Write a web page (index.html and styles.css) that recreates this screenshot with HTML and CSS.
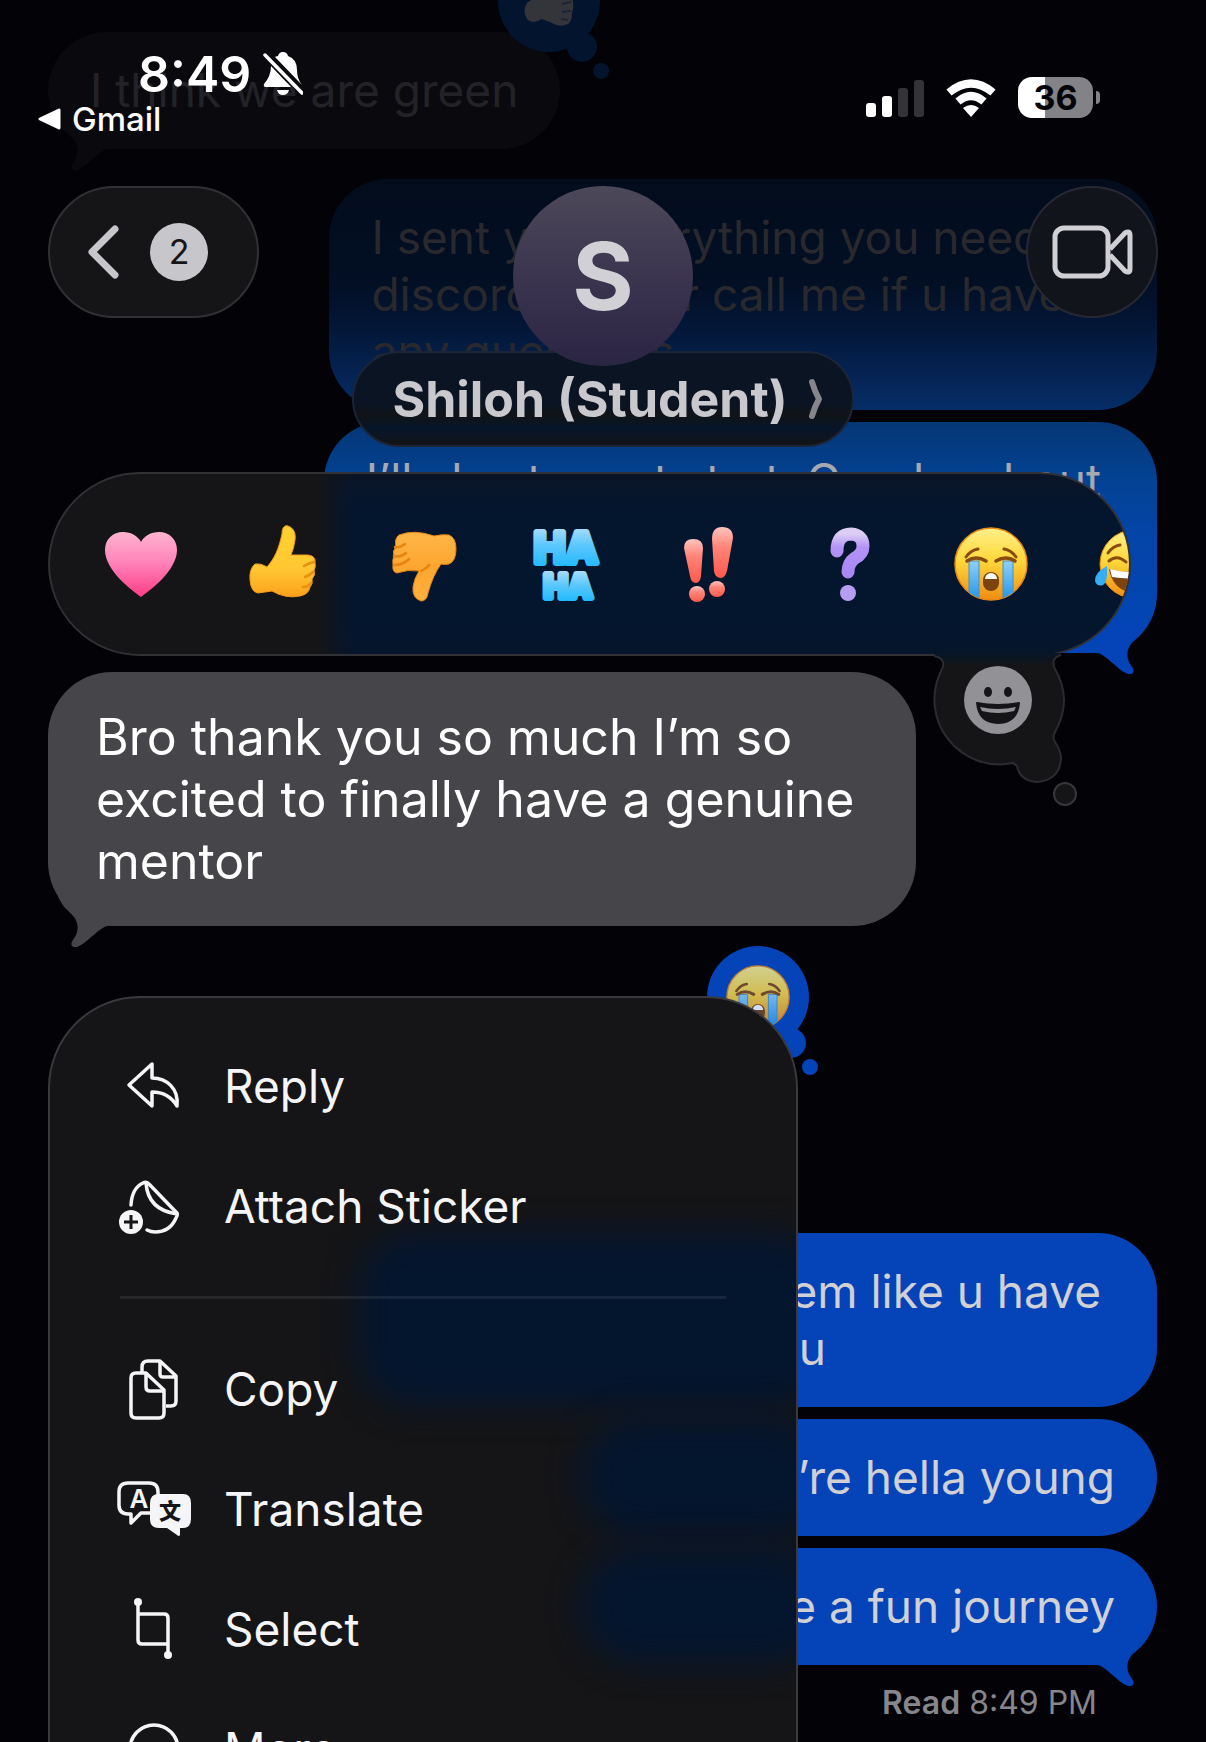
FILE: index.html
```html
<!DOCTYPE html>
<html lang="en">
<head>
<meta charset="utf-8">
<meta name="viewport" content="width=device-width, initial-scale=1">
<title>Shiloh (Student)</title>
<link rel="stylesheet" href="styles.css">
</head>
<body>
<svg class="defs" width="0" height="0" aria-hidden="true">
  <defs>
    <linearGradient id="yellow" x1="0" y1="0" x2="0" y2="1"><stop offset="0" stop-color="#fff08a"/><stop offset=".45" stop-color="#ffd83a"/><stop offset="1" stop-color="#f08c12"/></linearGradient>
    <linearGradient id="hand" x1="0" y1="0" x2="0" y2="1"><stop offset="0" stop-color="#ffd22e"/><stop offset=".6" stop-color="#ffc733"/><stop offset="1" stop-color="#fba21a"/></linearGradient>
    <linearGradient id="hand-down" x1="0" y1="0" x2="0" y2="1"><stop offset="0" stop-color="#ffb648"/><stop offset=".5" stop-color="#fda62f"/><stop offset="1" stop-color="#ffb040"/></linearGradient>
    <linearGradient id="pink" x1="0" y1="0" x2="0" y2="1"><stop offset="0" stop-color="#ffb3cf"/><stop offset=".45" stop-color="#ff85bb"/><stop offset="1" stop-color="#ff3d86"/></linearGradient>
    <linearGradient id="sky" x1="0" y1="0" x2="0" y2="1"><stop offset="0" stop-color="#bfe3fb"/><stop offset=".45" stop-color="#5cc8fd"/><stop offset="1" stop-color="#12b5ff"/></linearGradient>
    <linearGradient id="coral" x1="0" y1="0" x2="0" y2="1"><stop offset="0" stop-color="#ffc4bc"/><stop offset=".4" stop-color="#ff8377"/><stop offset="1" stop-color="#ff5a4c"/></linearGradient>
    <linearGradient id="violet" x1="0" y1="0" x2="0" y2="1"><stop offset="0" stop-color="#dccdf5"/><stop offset=".35" stop-color="#b394f6"/><stop offset="1" stop-color="#a988f2"/></linearGradient>
    <linearGradient id="tear" x1="0" y1="0" x2="0" y2="1"><stop offset="0" stop-color="#8fd0fb"/><stop offset="1" stop-color="#1f93e6"/></linearGradient>
    <linearGradient id="cloud-fill" x1="0" y1="0" x2="0" y2="1"><stop offset="0" stop-color="#07152a"/><stop offset=".1" stop-color="#151517"/></linearGradient>
    <clipPath id="face-clip"><circle cx="37" cy="37" r="36"/></clipPath>
    <symbol id="cry" viewBox="0 0 74 74">
      <circle cx="37" cy="37" r="36" fill="url(#yellow)" stroke="#e88a14" stroke-width="1.5"/>
      <g clip-path="url(#face-clip)">
        <path d="M15 34h10v40H15zM49 34h10v40H49z" fill="url(#tear)" stroke="#3f8fd0" stroke-width="1"/>
      </g>
      <path d="M12 30q5-7 12-8M62 30q-5-7-12-8" fill="none" stroke="#8a4a10" stroke-width="3" stroke-linecap="round"/>
      <path d="M13 34q9-6 19 0M42 34q10-6 19 0" fill="none" stroke="#8a4a10" stroke-width="3.5" stroke-linecap="round"/>
      <rect x="29" y="45" width="16" height="19" rx="8" fill="#7c430f"/>
      <path d="M31 52a6 6 0 0 1 12 0z" fill="#fff"/>
    </symbol>
    <symbol id="tail" viewBox="0 0 60 61">
      <path d="M0 40C9 41 20 57 31 61C37 62 38 58 35 54C29 46 29 38 34 31C39 25 46 21 50 10L20 8L0 36Z"/>
    </symbol>
    <symbol id="thought" viewBox="0 0 112 130">
      <circle cx="51" cy="51" r="51"/><circle cx="84" cy="97" r="15"/><circle cx="103" cy="121" r="8"/>
    </symbol>
  </defs>
</svg>

<main class="screen">
  <section class="thread" aria-label="Conversation">
    <div class="bubble received faded">I think we are green
      <svg class="tail"><use href="#tail"/></svg>
      <span class="tapback">
        <svg class="cloud"><use href="#thought"/></svg>
        <svg class="mini-thumb" viewBox="0 0 50 28"><path d="M3 4Q10-2 20-2L40-6Q48-6 49 2Q50 8 48 14Q48 22 44 25Q36 29 28 24L18 20Q8 26 3 20Q-2 12 3 4Z"/><path d="M38 5l9-2M38 13l9-1M37 20l7 1" stroke="#1c2534" stroke-width="2"/></svg>
      </span>
    </div>
    <div class="bubble sent first">I sent you everything you need on<br>discord, text or call me if u have<br>any questions</div>
    <div class="bubble sent second slack">I’ll also try out start. Good u about<br><br><br>
      <svg class="tail"><use href="#tail"/></svg>
    </div>
    <div class="bubble received covered">
      <span class="tapback blue">
        <svg class="cloud"><use href="#thought"/></svg>
        <svg class="mini-cry"><use href="#cry"/></svg>
      </span>
    </div>
    <div class="bubble sent group slack">And you really seem like u have<br>a lot in front of you</div>
    <div class="bubble sent">And you’re hella young</div>
    <div class="bubble sent">This will be a fun journey
      <svg class="tail"><use href="#tail"/></svg>
    </div>
    <p class="receipt"><b>Read</b> 8:49 PM</p>
  </section>

  <div class="overlay">
    <header class="status">
      <div class="clock">
        <div class="time">8:49
          <svg width="40" height="44" viewBox="0 0 40 44"><path fill="#fff" d="M20 0q4 0 5 4q9 3 9 14q0 9 5 15L12 5q2-1 3-1q1-4 5-4zM8 14L28 35H3q-3 0-2-3q7-8 7-18zM14 38h12q-1 5-6 5t-6-5z"/><path d="M2 3L39 41" stroke="#fff" stroke-width="3.5" stroke-linecap="round"/></svg>
        </div>
        <a class="return" href="#"><svg width="23" height="22" viewBox="0 0 23 22"><path d="M21 2v18L2 11z" fill="#fff" stroke="#fff" stroke-width="3" stroke-linejoin="round"/></svg>Gmail</a>
      </div>
      <div class="indicators">
        <svg width="58" height="38" viewBox="0 0 58 38"><g fill="#fff"><rect y="24" width="10" height="14" rx="3"/><rect x="16" y="17" width="10" height="21" rx="3"/></g><g fill="#333338"><rect x="32" y="9" width="10" height="29" rx="3"/><rect x="48" y="1" width="10" height="37" rx="3"/></g></svg>
        <svg width="50" height="38" viewBox="0 0 50 38"><g fill="none" stroke="#fff" stroke-width="8"><path d="M3 13.500Q25-4.500 47 13.500"/><path d="M12 22.500Q25 11.500 38 22.500"/></g><path d="M17 29q8-6 16 0l-8 9z" fill="#fff"/></svg>
        <div class="battery">36</div>
      </div>
    </header>

    <nav class="bar">
      <button class="glass back" aria-label="Back, 2 unread">
        <svg width="32" height="54" viewBox="0 0 32 54"><path d="M28 4L5 27L28 50" fill="none" stroke="#c6c6cb" stroke-width="7" stroke-linecap="round" stroke-linejoin="round"/></svg>
        <span class="unread">2</span>
      </button>
      <div class="contact">
        <div class="avatar">S</div>
        <button class="glass name">Shiloh (Student)
          <svg width="16" height="42" viewBox="0 0 16 42"><path d="M4 4Q7 14 11 21Q7 28 4 38" fill="none" stroke="#85858a" stroke-width="6" stroke-linecap="round" stroke-linejoin="round"/></svg>
        </button>
      </div>
      <button class="glass video" aria-label="FaceTime">
        <svg width="82" height="56" viewBox="0 0 82 56"><g fill="none" stroke="#cfcfd4" stroke-width="5" stroke-linejoin="round"><rect x="4" y="4" width="53" height="48" rx="9"/><path d="M59 25L74 9Q79 6 79 11V45Q79 50 74 47L59 31"/></g></svg>
      </button>
    </nav>

    <div class="tapbacks">
      <div class="glass reactions">
        <button aria-label="Heart"><svg viewBox="0 0 74 74"><path fill="url(#pink)" d="M37 70C29 64 1 44 1 23C1 12 9 5 19 5C27 5 34 9 37 15C40 9 47 5 55 5C65 5 73 12 73 23C73 44 45 64 37 70Z"/></svg></button>
        <button aria-label="Like"><svg viewBox="0 0 74 74"><path fill="url(#hand)" stroke="#f29a1c" stroke-width="1" d="M21 40C29 31 33 21 36 7C36 0 39-2 42-1C48 1 50 7 49 13Q48 21 45 28L62 28Q70 29 69 36Q70 40 68 43Q70 48 66 52Q67 57 64 60Q63 67 54 69Q40 72 26 64L12 66Q5 65 4 53Q3 42 9 37Q15 36 21 40Z"/><path d="M58 39q5-3 10-4M59 50q5-2 8-5M57 60q5 0 8-4" fill="none" stroke="#ec8e10" stroke-width="2.500" stroke-linecap="round"/></svg></button>
        <button aria-label="Dislike"><svg viewBox="0 0 74 74"><path fill="url(#hand-down)" stroke="#e88614" stroke-width="1" d="M11 8Q26 2 46 9Q55 7 61 8Q68 11 68 22Q68 34 61 37Q56 38 53 37Q45 48 40 66Q39 74 33 74Q24 71 25 60Q26 52 31 44Q20 42 9 46Q4 45 5 38Q4 33 6 29Q4 24 8 20Q6 12 11 8Z"/><path d="M6 29q6 2 12-3M7 20q5 1 10-3M7 38q8 0 14-6M33 44q6-3 8-6" fill="none" stroke="#e88410" stroke-width="2.500" stroke-linecap="round"/></svg></button>
        <button aria-label="Haha"><svg viewBox="0 0 74 74"><g font-family="Inter, sans-serif" font-weight="800" fill="url(#sky)" stroke="url(#sky)" stroke-width="6" stroke-linejoin="round" stroke-linecap="round" text-anchor="middle"><text x="36" y="36" font-size="42">HA</text><text x="38" y="71" font-size="32">HA</text></g></svg></button>
        <button aria-label="Emphasize"><svg viewBox="0 0 74 74"><g fill="url(#coral)"><path d="M12 21q0-9 9-9q10 0 10 9L29 49q-1 7-5 7q-5 0-6-7Z"/><path d="M40 12q0-12 10-12q11 0 11 11L55 44q-2 7-6 7q-6 0-7-7Z"/><circle cx="25" cy="67" r="8"/><circle cx="45" cy="62" r="8"/></g></svg></button>
        <button aria-label="Question"><svg viewBox="0 0 74 74"><path d="M23 24Q23 7 37 7Q49 8 49 19Q49 27 41 31Q34 36 34 45" fill="none" stroke="url(#violet)" stroke-width="13" stroke-linecap="round"/><circle cx="34" cy="66" r="8" fill="#b79df2"/></svg></button>
        <button aria-label="Crying"><svg viewBox="2 0 74 74"><use href="#cry" width="74" height="74"/></svg></button>
        <button aria-label="Laughing"><svg viewBox="3 0 74 74"><circle cx="39" cy="37" r="34" fill="url(#yellow)" stroke="#e88a14"/><path d="M13 26q5-7 12-8M14 34q8-7 17 1" fill="none" stroke="#8a4a10" stroke-width="3" stroke-linecap="round"/><path d="M14 42Q37 48 64 42Q60 66 39 66Q18 64 14 42Z" fill="#7c430f"/><path d="M15 42Q37 48 63 42L62 50Q37 53 17 50Z" fill="#fff"/><path d="M12 39Q-1 46 0 54Q2 60 8 58Q13 55 12 39Z" fill="#35aef2"/></svg></button>
      </div>
      <button class="picker" aria-label="More emoji">
        <svg width="160" height="162" viewBox="0 0 160 162">
          <path d="M10 6L12 3H135L137 5Q126 8 131 19Q149 50 131 82Q128 88 131 92Q137 101 137 108Q136 130 113 132Q96 131 93 116Q91 114 89 113A65 65 0 0 1 17 21Q24 9 10 6Z" fill="url(#cloud-fill)"/>
          <path d="M10 6Q24 9 17 21A65 65 0 0 0 89 113Q91 114 93 116Q96 131 113 132Q136 130 137 108Q137 101 131 92Q128 88 131 82Q149 50 131 19Q126 8 137 5" fill="none" stroke="#2c2c30" stroke-width="2"/>
          <circle cx="141" cy="144" r="11" fill="#151517" stroke="#37373b" stroke-width="2"/>
          <circle cx="74" cy="50" r="34" fill="#919196"/>
          <ellipse cx="64" cy="42" rx="4" ry="5" fill="#151517"/><ellipse cx="84" cy="42" rx="4" ry="5" fill="#151517"/>
          <path d="M53 53Q74 57 95 53Q93 73 74 73Q55 73 53 53Z" fill="#151517" stroke="#151517" stroke-width="2" stroke-linejoin="round"/>
          <path d="M56 57Q74 61 92 57L90 61Q74 65 58 61Z" fill="#919196"/>
        </svg>
      </button>
    </div>

    <div class="bubble focused">Bro thank you so much I’m so<br>excited to finally have a genuine<br>mentor
      <svg class="tail"><use href="#tail"/></svg>
    </div>

    <div class="glass menu" role="menu">
      <div class="glow" aria-hidden="true"><i class="wide"></i><i></i><i></i></div>
      <button role="menuitem"><svg viewBox="0 0 76 64"><path d="M12 31L35 10V24C50 24 62 35 60 52C54 42 46 38 35 38V52Z" fill="none" stroke="#f5f5f7" stroke-width="3.500" stroke-linejoin="round"/></svg>Reply</button>
      <button role="menuitem"><svg viewBox="0 0 76 64"><g fill="none" stroke="#f5f5f7" stroke-width="3.500" stroke-linecap="round" stroke-linejoin="round"><path d="M14 31Q15 14 26 9Q29 7 32 10L58 37Q62 40 59 44Q53 58 38 58Q34 58 30 56"/><path d="M29 9Q31 36 60 40"/></g><circle cx="14" cy="48" r="12" fill="#f5f5f7"/><path d="M14 41v14M7 48h14" stroke="#151517" stroke-width="3"/></svg>Attach Sticker</button>
      <hr>
      <button role="menuitem"><svg viewBox="0 0 76 64"><g fill="none" stroke="#f5f5f7" stroke-width="3.500" stroke-linejoin="round"><path d="M25 15V10Q25 4 31 4H43L59 19V44Q59 49 54 49H49"/><path d="M43 4V17Q43 20 46 20H58"/><path d="M19 16H29L47 33V56Q47 61 42 61H19Q14 61 14 56V21Q14 16 19 16Z"/><path d="M29 16V30Q29 34 33 34H47"/></g></svg>Copy</button>
      <button role="menuitem"><svg viewBox="0 0 76 64"><path d="M33 36H24L14 46V37H11Q2 37 2 28V15Q2 6 11 6H32Q41 6 41 15V17" fill="none" stroke="#f5f5f7" stroke-width="3.500" stroke-linecap="round" stroke-linejoin="round"/><text x="22" y="31" font-size="26" font-weight="600" text-anchor="middle" fill="#f5f5f7">A</text><path d="M42 17H66Q74 17 74 26V42Q74 51 66 51H63V58Q62 60 60 58L50 51H42Q33 51 33 42V26Q33 17 42 17Z" fill="#f5f5f7"/><text class="cjk" x="53" y="42" font-size="22" font-weight="900" text-anchor="middle" fill="#151517">文</text></svg>Translate</button>
      <button role="menuitem"><svg viewBox="0 0 76 64"><path d="M21 5V43Q21 47 25 47H51M21 17H47Q51 17 51 21V58" fill="none" stroke="#f5f5f7" stroke-width="3.500"/><circle cx="21" cy="5" r="4" fill="#f5f5f7"/><circle cx="51" cy="58" r="4" fill="#f5f5f7"/></svg>Select</button>
      <button role="menuitem"><svg viewBox="0 0 76 64"><circle cx="37" cy="32" r="24" fill="none" stroke="#f5f5f7" stroke-width="3.500"/><g fill="#f5f5f7"><circle cx="26" cy="32" r="3"/><circle cx="37" cy="32" r="3"/><circle cx="48" cy="32" r="3"/></g></svg>More…</button>
    </div>
  </div>
</main>
</body>
</html>
```

FILE: styles.css
```css
* { box-sizing: border-box; }

body {
  margin: 0;
  background: #020207;
  color: #f5f5f7;
  font-family: Inter, "Liberation Sans", sans-serif;
}

svg { display: block; flex: none; }
.defs { position: absolute; }

button {
  margin: 0;
  padding: 0;
  border: 0;
  background: none;
  color: inherit;
  font: inherit;
  text-align: left;
}

.screen {
  display: grid;
  height: 100vh;
  overflow: hidden;
}

.thread, .overlay {
  grid-area: 1 / 1;
  min-width: 0;
  display: flex;
  flex-direction: column;
  padding: 0 48px;
}
.thread { padding-right: 49px; }

/* Message bubbles */
.bubble {
  position: relative;
  flex: none;
  padding: 30px 42px;
  border-radius: 59px;
  font-size: 46px;
  line-height: 57px;
  white-space: nowrap;
}

.tail {
  position: absolute;
  right: 0;
  bottom: -21px;
  width: 60px;
  height: 61px;
}

.sent {
  align-self: flex-end;
  margin-top: 12px;
  background: #0443b8;
  color: #d0d0d5;
}
.sent .tail { fill: #0443b8; }
.slack { padding-right: 56px; }

.received, .focused { align-self: flex-start; }
.received .tail, .focused .tail {
  right: auto;
  left: 0;
  transform: scaleX(-1);
}

.faded {
  margin-top: 32px;
  background: #0a0a0e;
  color: #232327;
}
.faded .tail { fill: #0a0a0e; }

.first {
  margin-top: 30px;
  padding-right: 48px;
  background: linear-gradient(#020c1c, #020f24 45%, #031738 65%, #062d68);
  color: #29292d;
}

.second {
  background: linear-gradient(#053675, #034293 25%, #0345a8 50%, #0345b8);
  color: #a7a9b0;
}

.covered {
  width: 65%;
  height: 174px;
  margin-top: 375px;
  background: #151517;
}

.group { margin-top: 31px; }

.receipt {
  align-self: flex-end;
  margin: 18px 60px 0 0;
  color: #86868b;
  font-size: 32px;
  line-height: 40px;
}
.receipt b { font-weight: 600; }

.tapback {
  position: absolute;
  top: -82px;
  right: -50px;
  width: 112px;
  height: 130px;
  fill: #03142f;
}
.tapback.blue { fill: #0443b8; }
.cloud { width: 112px; height: 130px; }
.mini-thumb {
  position: absolute;
  top: 49px;
  left: 26px;
  width: 50px;
  height: 28px;
  fill: #34353a;
}
.mini-cry {
  position: absolute;
  top: 19px;
  left: 19px;
  width: 64px;
  height: 64px;
  opacity: .82;
}

/* Status bar */
.overlay { position: relative; }

.status {
  flex: none;
  display: flex;
  justify-content: space-between;
  align-items: flex-start;
  height: 186px;
  margin: 0 58px 0 -10px;
}

.clock { padding-top: 44px; }

.time {
  display: flex;
  align-items: center;
  gap: 12px;
  padding-left: 100px;
  font-size: 50px;
  font-weight: 600;
  line-height: 60px;
  color: #fff;
}

.return {
  display: flex;
  align-items: center;
  gap: 11px;
  color: #fff;
  font-size: 33px;
  font-weight: 500;
  line-height: 30px;
  text-decoration: none;
}

.indicators {
  display: flex;
  align-items: center;
  gap: 22px;
  padding-top: 77px;
}

.battery {
  position: relative;
  width: 75px;
  margin-right: 7px;
  border-radius: 14px;
  background: linear-gradient(90deg, #fff 36%, #828287 36%);
  color: #050509;
  font-size: 34px;
  font-weight: 700;
  line-height: 41px;
  text-align: center;
}
.battery::after {
  content: "";
  position: absolute;
  top: 14px;
  right: -7px;
  width: 4px;
  height: 13px;
  border-radius: 0 4px 4px 0;
  background: #828287;
}

/* Dark glass surfaces */
.glass {
  border: 2px solid #313135;
  background: #151517;
}

/* Navigation */
.bar {
  flex: none;
  display: grid;
  grid-template-columns: 1fr auto 1fr;
  align-items: start;
}

.back {
  display: flex;
  align-items: center;
  gap: 31px;
  width: 211px;
  height: 132px;
  padding-left: 37px;
  border-radius: 66px;
}

.unread {
  width: 58px;
  border-radius: 50%;
  background: #c6c6cb;
  color: #151517;
  font-size: 34px;
  line-height: 58px;
  text-align: center;
}

.contact {
  display: flex;
  flex-direction: column;
  align-items: center;
}

.avatar {
  position: relative;
  z-index: 1;
  width: 180px;
  border-radius: 50%;
  background: linear-gradient(#4d4858, #3b3550 50%, #2b2544);
  color: #d0d0d5;
  font-size: 94px;
  font-weight: 700;
  line-height: 180px;
  text-align: center;
}

.name {
  display: flex;
  align-items: center;
  gap: 20px;
  height: 96px;
  margin-top: -15px;
  padding: 0 28px 0 38px;
  border-color: #1c2538;
  border-radius: 48px;
  background: linear-gradient(#0a1423, #0a1423 55%, #111317 68%, #06152a 82%, #131416);
  color: #c8c8cd;
  font-size: 50px;
  font-weight: 700;
}

.video {
  justify-self: end;
  display: grid;
  place-items: center;
  width: 132px;
  height: 132px;
  border-color: #282734;
  border-radius: 50%;
  background: #11141b;
}

/* Tapback picker */
.tapbacks {
  position: relative;
  flex: none;
  margin: 25px 27px 0 0;
}

.reactions {
  display: flex;
  align-items: center;
  gap: 68px;
  height: 184px;
  padding-left: 54px;
  border-radius: 92px;
  background:
    linear-gradient(90deg, #151517 25%, rgba(21, 21, 23, 0) 28%),
    linear-gradient(#0a1526, #04152e 20%, #04152e 85%, #07152a);
  background-origin: border-box;
  overflow: hidden;
}
.reactions button { flex: none; }
.reactions svg { width: 74px; height: 74px; overflow: visible; }

.picker {
  position: absolute;
  right: 47px;
  top: 178px;
}

/* Selected message */
.focused {
  margin-top: 16px;
  padding: 34px 62px 34px 48px;
  border-radius: 64px;
  background: #464549;
  color: #fff;
  font-size: 50px;
  line-height: 62px;
}
.focused .tail { fill: #464549; }

/* Context menu */
.menu {
  position: relative;
  isolation: isolate;
  flex: none;
  width: 750px;
  max-width: 100%;
  margin-top: 70px;
  padding: 28px 0;
  border-color: #3a3a3e;
  border-radius: 92px;
}

.menu button {
  display: flex;
  align-items: center;
  gap: 31px;
  width: 100%;
  height: 120px;
  padding-left: 67px;
  font-size: 46px;
}
.menu svg { width: 76px; height: 64px; }
.cjk { font-family: "Noto Sans CJK SC", sans-serif; }

.menu hr {
  height: 3px;
  margin: 30px 70px;
  border: 0;
  background: rgba(255, 255, 255, .08);
}

/* Colour of the sent bubbles diffused through the menu */
.glow {
  position: absolute;
  z-index: -1;
  inset: 0;
  display: flex;
  flex-direction: column;
  align-items: flex-end;
  gap: 13px;
  padding-top: 235px;
  border-radius: inherit;
  overflow: hidden;
}
.glow i {
  width: 245px;
  height: 116px;
  margin-right: -30px;
  border-radius: 58px;
  background: #04152e;
  filter: blur(16px);
}
.glow .wide {
  width: 468px;
  height: 173px;
}
```
